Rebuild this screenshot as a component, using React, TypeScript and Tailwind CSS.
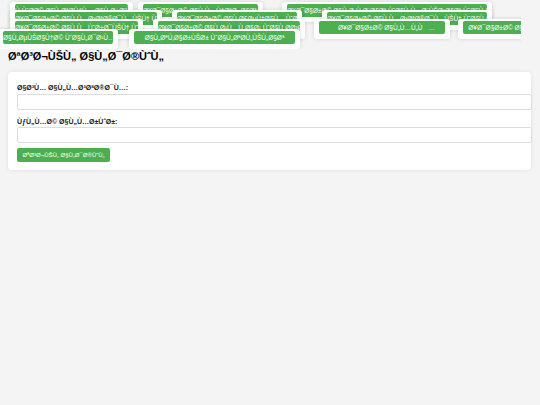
import React from "react";

// the page shows UTF-8 Arabic read as windows-1252
const moj = (s: string) => new TextDecoder("windows-1252").decode(new TextEncoder().encode(s));

type NavItem = { text: string; box: string; btn: string };

const rows: { cls: string; items: NavItem[] }[] = [
  {
    cls: "h-[8px]",
    items: [
      { text: "لوحة التحكم الرئيسية", box: "ml-[10px]", btn: "w-[113px]" },
      { text: "إدارة المنتجات والأقسام", box: "ml-[5px]", btn: "w-[115px]" },
      { text: "إدارة الطلبات والمبيعات والمخزون والفواتير", box: "ml-[19px]", btn: "w-[200px]" },
    ],
  },
  {
    cls: "h-[9px]",
    items: [
      { text: "إدارة المستخدمين والصلاحيات", box: "ml-[10px]", btn: "w-[142px]" },
      { text: "إدارة الأصناف والعروض", box: "ml-[10px]", btn: "w-[120px]" },
      { text: "إدارة المستخدمين والصلاحيات والأدوار", box: "ml-[20px]", btn: "w-[160px]" },
    ],
  },
  {
    cls: "h-[10px]",
    items: [
      { text: "إدارة الموردين والمشتريات", box: "ml-[10px]", btn: "w-[123px]" },
      { text: "إدارة العملاء والحسابات", box: "ml-[10px]", btn: "w-[142px]" },
      { text: "إدارة الملفات والمستندات", box: "ml-[9px]", btn: "w-[126px] !text-left pl-[19px] pr-[8px] text-ellipsis" },
      { text: "إدارة الموردين", box: "ml-[8px]", btn: "w-[125px]" },
    ],
  },
  {
    cls: "h-[20px]",
    items: [
      { text: "الصيانة والدعم الفني", box: "ml-[-2px]", btn: "w-[110px]" },
      { text: "التقارير والتحليلات", box: "ml-[11px]", btn: "w-[161px]" },
    ],
  },
];

function NavButton({ item }: { item: NavItem }) {
  return (
    <div className={`shrink-0 self-start bg-white rounded-[3px] shadow-[0_0_4px_rgba(0,0,0,0.14)] px-[5px] pt-[2px] pb-[5px] ${item.box}`}>
      <span className={`block h-[13px] bg-[#4caf50] rounded-[2px] text-white text-[6.5px] leading-[13px] text-center whitespace-nowrap overflow-hidden ${item.btn}`}>
        {moj(item.text)}
      </span>
    </div>
  );
}

export default function App() {
  return (
    <div className="min-h-screen bg-[#f4f4f4] font-['Liberation_Sans',Arial,sans-serif] text-[#222]">
      {/* Menu */}
      <nav className="w-[521px] h-[49px] pt-[2px] overflow-hidden">
        {rows.map((r, i) => (
          <div key={i} className={`flex ${r.cls}`}>
            {r.items.map((it, j) => (
              <NavButton key={j} item={it} />
            ))}
          </div>
        ))}
      </nav>

      <h2 className="ml-[8px] text-[11px] leading-[14px] font-bold text-black">{moj("تسجيل الدخول")}</h2>

      {/* Formulaire */}
      <div className="ml-[8px] mt-[9px] w-[523px] bg-white rounded-[4px] shadow-[0_0_4px_rgba(0,0,0,0.08)] pt-[11px] pb-[8px] px-[9px]">
        <label className="block text-[7px] leading-[9px] font-bold mb-[2px]">{moj("اسم المستخدم:")}</label>
        <input className="block w-[515px] h-[16px] border border-[#ddd] rounded-[2px] bg-white outline-none" />

        <label className="block text-[7px] leading-[9px] font-bold mt-[7px] mb-[1px]">{moj("كلمة المرور:")}</label>
        <input type="password" className="block w-[515px] h-[16px] border border-[#ddd] rounded-[2px] bg-white outline-none" />

        <button className="block mt-[5px] w-[93px] h-[14px] bg-[#4caf50] rounded-[2px] text-white text-[6px] leading-[14px] text-center whitespace-nowrap">
          {moj("تسجيل الدخول")}
        </button>
      </div>
    </div>
  );
}
